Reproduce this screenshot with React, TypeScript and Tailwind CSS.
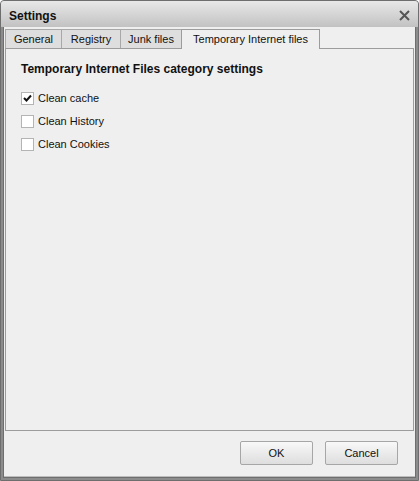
import React from "react";

const font = { fontFamily: "Tahoma, 'Liberation Sans', 'DejaVu Sans', sans-serif" };

function Check({ checked, label }: { checked?: boolean; label: string }) {
  return (
    <div className="flex items-center h-[23px]">
      <div className="w-[13px] h-[13px] border border-[#b4b4b4] bg-white flex items-center justify-center">
        {checked && (
          <svg width="9" height="9" viewBox="0 0 9 9">
            <path d="M1 4 L3.5 6.5 L8 1.5" stroke="#111" strokeWidth="2" fill="none" />
          </svg>
        )}
      </div>
      <span className="ml-[4px] text-[11px] text-[#111]">{label}</span>
    </div>
  );
}

function Tab({ label, active, w }: { label: string; active?: boolean; w: string }) {
  if (active)
    return (
      <div className={`${w} h-[20px] -mb-px bg-[#efefef] border border-b-0 border-[#9c9c9c] flex items-center justify-center text-[11px] text-[#111] relative z-10`}>
        {label}
      </div>
    );
  return (
    <div className={`${w} h-[19px] mt-[1px] bg-[#dedede] border border-[#a8a8a8] border-b-0 flex items-center justify-center text-[11px] text-[#111] -mr-px`}>
      {label}
    </div>
  );
}

export default function App() {
  return (
    <div style={font} className="w-[419px] h-[481px] bg-[#8c8c8c] rounded-t-[4px] flex flex-col border border-[#6e6e6e]">
      <div className="h-[26px] shrink-0 rounded-t-[3px] bg-gradient-to-b from-[#e8e8e8] to-[#c2c2c2] flex items-center justify-between pl-[8px] pr-[8px]">
        <span className="text-[12px] font-bold text-[#111] mt-[3px]">Settings</span>
        <svg width="11" height="11" viewBox="0 0 11 11" className="mt-[3px]">
          <path d="M1 1 L10 10 M10 1 L1 10" stroke="#555" strokeWidth="2" />
        </svg>
      </div>
      <div className="flex-1 mx-[2px] mb-[2px] border-l border-r border-b border-[#6e6e6e] bg-[#bdbdbd] pb-[1px] flex flex-col">
        <div className="flex-1 bg-[#efefef] flex flex-col">
          <div className="flex items-end pt-[1px] pl-[1px] pr-[1px]">
            <Tab w="w-[57px]" label="General" />
            <Tab w="w-[60px]" label="Registry" />
            <Tab w="w-[62px]" label="Junk files" />
            <Tab w="w-[139px]" label="Temporary Internet files" active />
          </div>
          <div className="mx-[1px] h-[383px] border border-[#9c9c9c] bg-[#efefef] px-[15px] pt-[11px]">
            <div className="text-[12px] font-bold text-[#111]">Temporary Internet Files category settings</div>
            <div className="mt-[9px]">
              <Check checked label="Clean cache" />
              <Check label="Clean History" />
              <Check label="Clean Cookies" />
            </div>
          </div>
          <div className="flex justify-end gap-[12px] pr-[17px] pt-[10px]">
            <button className="w-[73px] h-[24px] border border-[#a6a6a6] rounded-[2px] bg-gradient-to-b from-[#f8f8f8] to-[#dedede] text-[11px] text-[#111]">OK</button>
            <button className="w-[73px] h-[24px] border border-[#a6a6a6] rounded-[2px] bg-gradient-to-b from-[#f8f8f8] to-[#dedede] text-[11px] text-[#111]">Cancel</button>
          </div>
        </div>
      </div>
    </div>
  );
}
